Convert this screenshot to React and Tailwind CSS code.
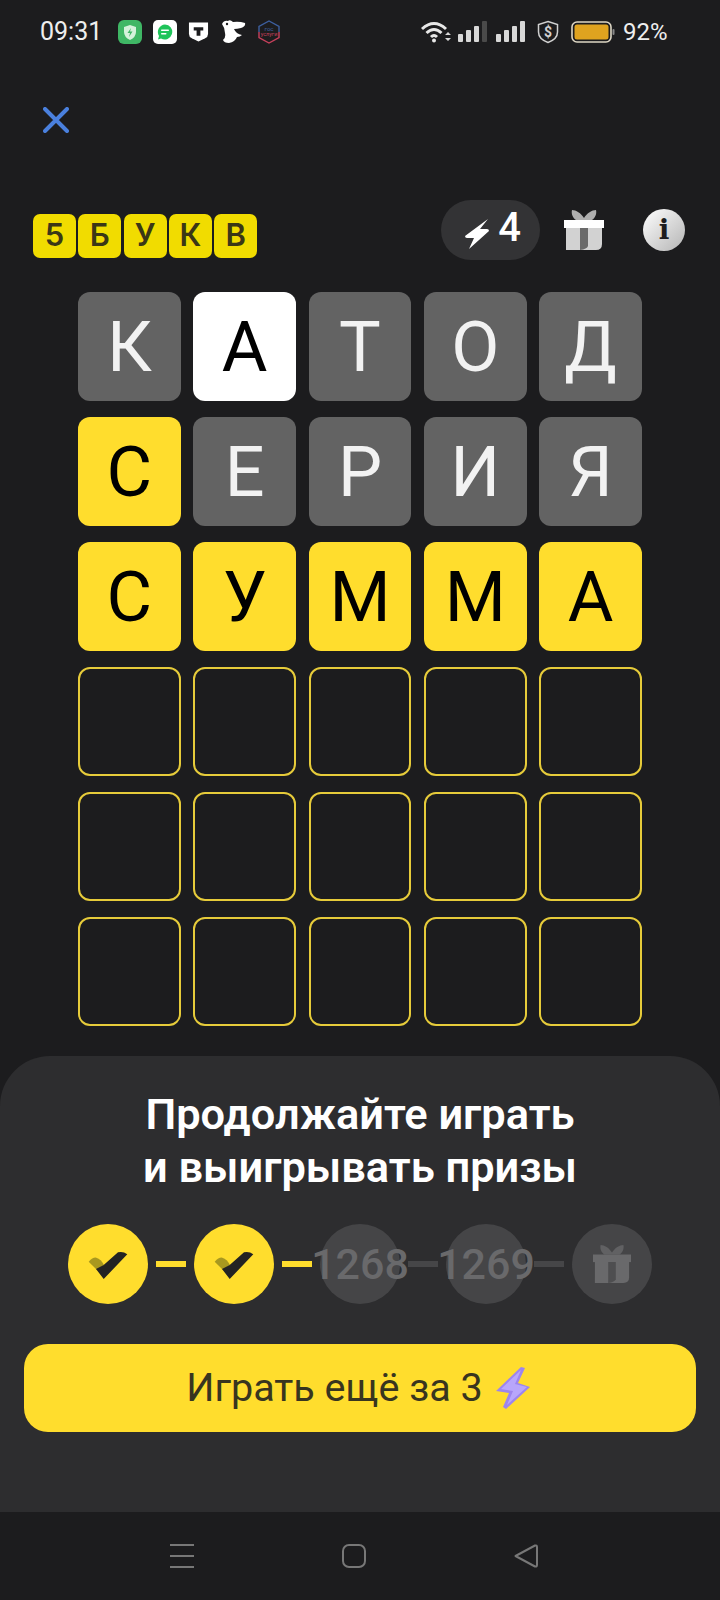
import React from 'react';

const rows = [
  [['К', 'gray'], ['А', 'white'], ['Т', 'gray'], ['О', 'gray'], ['Д', 'gray']],
  [['С', 'yellow'], ['Е', 'gray'], ['Р', 'gray'], ['И', 'gray'], ['Я', 'gray']],
  [['С', 'yellow'], ['У', 'yellow'], ['М', 'yellow'], ['М', 'yellow'], ['А', 'yellow']],
  [['', 'empty'], ['', 'empty'], ['', 'empty'], ['', 'empty'], ['', 'empty']],
  [['', 'empty'], ['', 'empty'], ['', 'empty'], ['', 'empty'], ['', 'empty']],
  [['', 'empty'], ['', 'empty'], ['', 'empty'], ['', 'empty'], ['', 'empty']],
];

const cellStyles = {
  gray: 'bg-[#636363] text-[#f2f2f2]',
  white: 'bg-white text-black',
  yellow: 'bg-[#ffdd2d] text-black',
  empty: 'border-2 border-[#e6cb3a]',
};

const Gift = ({ bow, bar, body, stripe, className }) => (
  <svg viewBox="0 0 40 40" className={className}>
    <path d="M8 0 C12 0 17 3 20 8 C23 3 28 0 32 0 C33 4 31 8 28 10 L12 10 C9 8 7 4 8 0 Z" fill={bow} />
    <rect x="0" y="10" width="40" height="8" fill={bar} />
    <path d="M2 18 H38 V34 Q38 40 32 40 H2 Z" fill={body} />
    <path d="M16 18 H24 V36 Q23 39 16 40 Z" fill={stripe} />
  </svg>
);

const Check = () => (
  <svg viewBox="0 0 80 80" className="w-20 h-20">
    <path d="M20.7 37.7 Q25 33 28.3 33.7 Q33 35 36 41 L29 46 Z" fill="#a8981f" />
    <path d="M28 45 L35.7 41 L50 28.3 Q55 27 59.3 30.3 L35.7 55 Z" fill="#232323" />
  </svg>
);

const Signal = ({ dim }) => (
  <svg viewBox="0 0 29 22" className="w-[29px] h-[22px]">
    <rect x="0" y="13" width="5" height="8" rx="1" fill="#d8d8d8" />
    <rect x="8" y="9" width="5" height="12" rx="1" fill="#d8d8d8" />
    <rect x="16" y="5" width="5" height="16" rx="1" fill="#d8d8d8" />
    <rect x="24" y="0" width="5" height="21" rx="1" fill={dim ? '#4a4a4a' : '#d8d8d8'} />
  </svg>
);

const StatusBar = () => (
  <div className="h-16 flex items-center pl-[40px] text-[#eeeeee] text-[25px] font-['Roboto',sans-serif]">
    <span className="w-[78px]">09:31</span>
    <div className="flex items-center gap-[11px]">
      <svg viewBox="0 0 24 24" className="w-6 h-6">
        <rect width="24" height="24" rx="6" fill="#3fb765" />
        <path d="M12 5 L18 7 V12 Q18 17 12 20 Q6 17 6 12 V7 Z" fill="#d5f2dc" />
        <path d="M13 8 L9.5 13 H12 L11 17 L14.5 11.5 H12 Z" fill="#3fb765" />
      </svg>
      <svg viewBox="0 0 24 24" className="w-6 h-6">
        <rect width="24" height="24" rx="5" fill="#ffffff" />
        <path d="M12 4.5 A7.5 7.5 0 1 1 8 18.5 L5 19.5 L6 16 A7.5 7.5 0 0 1 12 4.5 Z" fill="#1fc45a" />
        <rect x="8" y="9.5" width="8" height="1.5" rx="0.7" fill="#fff" />
        <rect x="8" y="13" width="5.5" height="1.5" rx="0.7" fill="#fff" />
      </svg>
      <svg viewBox="0 0 22 24" className="w-[21px] h-6">
        <path d="M1 2 H21 V14 Q21 17 18 18.5 L11 22 L4 18.5 Q1 17 1 14 Z" fill="#ffffff" />
        <path d="M6 7 H16 V10.5 H13 V16 H9 V10.5 H6 Z" fill="#1c1c1e" />
      </svg>
      <svg viewBox="0 0 26 24" className="w-[26px] h-6">
        <path d="M2 4 Q4 0 8 1 Q10 -1 13 2 Q19 1 25 3 Q26 6 21 8 Q17 9 14 9 Q16 14 22 15 Q20 17 17 17 Q15 22 9 23 Q4 23 3 20 Q6 18 5 13 Q5 8 2 4 Z" fill="#ffffff" />
        <circle cx="7" cy="4" r="1.2" fill="#1c1c1e" />
      </svg>
      <svg viewBox="0 0 24 24" className="w-6 h-6">
        <path d="M2 12 V6.5 L12 1 L22 6.5 V12" stroke="#3d5f9f" strokeWidth="1.4" fill="none" />
        <path d="M2 12 V17.5 L12 23 L22 17.5 V12" stroke="#c7405c" strokeWidth="1.4" fill="none" />
        <text x="12" y="10.5" textAnchor="middle" fontSize="6" fill="#3d5f9f" fontFamily="Roboto, sans-serif">гос</text>
        <text x="12" y="15.5" textAnchor="middle" fontSize="5.5" fill="#c7405c" fontFamily="Roboto, sans-serif">услуги</text>
      </svg>
    </div>
    <div className="flex items-center ml-[140px]">
      <svg viewBox="0 0 30 24" className="w-[30px] h-6">
        <path d="M1 9 Q13 -2 25 9" stroke="#e8e8e8" strokeWidth="3" fill="none" />
        <path d="M5.5 13 Q13 6 20.5 13" stroke="#e8e8e8" strokeWidth="3" fill="none" />
        <path d="M10 17 Q13 14 16 17" stroke="#e8e8e8" strokeWidth="3" fill="none" />
        <circle cx="13" cy="20.5" r="2" fill="#e8e8e8" />
        <path d="M24 15 L27 12 L30 15 Z M24 18 H30 L27 21 Z" fill="#d8d8d8" />
      </svg>
      <div className="ml-[7px]"><Signal dim /></div>
      <div className="ml-[9px]"><Signal /></div>
      <svg viewBox="0 0 22 24" className="ml-[12px] w-[22px] h-6">
        <path d="M11 1.5 L20.5 4.5 V12 Q20.5 19 11 22.5 Q1.5 19 1.5 12 V4.5 Z" stroke="#d0d0d0" strokeWidth="1.5" fill="none" />
        <text x="11" y="17" textAnchor="middle" fontSize="14" fontWeight="700" fill="#d0d0d0" fontFamily="Roboto, sans-serif">$</text>
      </svg>
      <svg viewBox="0 0 44 22" className="ml-[12px] w-[44px] h-[22px]">
        <rect x="1" y="1" width="39" height="20" rx="5" stroke="#ddd6c4" strokeWidth="1.6" fill="none" />
        <rect x="3.5" y="3.5" width="34" height="15" rx="2.5" fill="#dfa31f" />
        <rect x="41.5" y="8" width="2" height="6" rx="1" fill="#888888" />
      </svg>
      <span className="ml-[8px] text-[24px]">92%</span>
    </div>
  </div>
);

const Logo = () => (
  <div className="flex gap-[2.3px] mt-[11px] font-['Inter',sans-serif] font-semibold">
    {['5', 'Б', 'У', 'К', 'В'].map((ch, i) => (
      <div key={i} className="w-[43px] h-[44px] rounded-[7px] bg-[#f1dc00] text-[#3b3716] text-[31px] flex items-center justify-center">
        {ch}
      </div>
    ))}
  </div>
);

const Header = () => (
  <div className="mt-[67px] h-[60px] flex items-center pl-[33px]">
    <Logo />
    <div className="ml-[184px] w-[99px] h-[60px] rounded-[30px] bg-[#333335] flex items-center pl-[24px]">
      <svg viewBox="0 0 24 30" className="w-[24px] h-[30px] mt-[8px]">
        <path d="M23 0 L0 17 Q0 19 2 19 H9 L4 30 L24 12 Q24 10 22 10 H15 Z" fill="#ffffff" />
      </svg>
      <span className="ml-[9px] mb-[4px] text-white text-[40px] font-medium leading-none font-['Roboto',sans-serif]">4</span>
    </div>
    <Gift bow="#aeaeae" bar="#ffffff" body="#d2d2d2" stripe="#6a6a6a" className="ml-[24px] w-[40px] h-[40px]" />
    <div className="ml-[39px] w-[42px] h-[42px] rounded-full bg-gradient-to-br from-white to-[#b5b5b5] flex items-center justify-center">
      <span className="text-[#1c1c1e] text-[28px] font-bold font-['DejaVu_Serif',serif] leading-none">i</span>
    </div>
  </div>
);

const Board = () => (
  <div className="mt-[32px] mx-[78px] flex flex-col gap-y-[16px] font-['Roboto',sans-serif]">
    {rows.map((row, r) => (
      <div key={r} className="grid grid-cols-5 gap-x-[12.5px]">
        {row.map(([ch, kind], c) => (
          <div key={c} className={`h-[109px] rounded-[12px] flex items-center justify-center text-[70px] leading-none ${cellStyles[kind]}`}>
            {ch}
          </div>
        ))}
      </div>
    ))}
  </div>
);

const Line = ({ active }) => (
  <div className={`w-[30px] h-[6px] mx-[8px] ${active ? 'bg-[#ffdd2d]' : 'bg-[#464648]'}`} />
);

const Steps = () => (
  <div className="mt-[30px] flex items-center pl-[68px]">
    <div className="w-20 h-20 rounded-full bg-[#ffdd2d]"><Check /></div>
    <Line active />
    <div className="w-20 h-20 rounded-full bg-[#ffdd2d]"><Check /></div>
    <Line active />
    <div className="w-20 h-20 rounded-full bg-[#454547] flex items-center justify-center text-[#69696b] text-[43px] font-medium">
      <span className="whitespace-nowrap">1268</span>
    </div>
    <Line />
    <div className="w-20 h-20 rounded-full bg-[#454547] flex items-center justify-center text-[#69696b] text-[43px] font-medium">
      <span className="whitespace-nowrap">1269</span>
    </div>
    <Line />
    <div className="w-20 h-20 rounded-full bg-[#454547] flex items-center justify-center">
      <Gift bow="#616163" bar="#69696b" body="#69696b" stripe="#4e4e50" className="w-[38px] h-[38px]" />
    </div>
  </div>
);

const Sheet = () => (
  <div className="mt-[30px] h-[456px] rounded-t-[50px] bg-[#2d2d2f] pt-[32px] font-['Roboto',sans-serif]">
    <h2 className="text-white text-[43.4px] font-semibold leading-[53px] text-center">
      Продолжайте играть
      <br />
      и выигрывать призы
    </h2>
    <Steps />
    <div className="mt-[40px] mx-[24px] h-[88px] rounded-[24px] bg-[#ffdd2d] flex items-center justify-center text-[#38351f] text-[39.5px]">
      <span>Играть ещё за 3</span>
      <svg viewBox="0 0 34 42" className="ml-[11px] w-[38px] h-[42px] mr-[2px]">
        <path d="M25 0 L29 1 L22 16 L34 20 L10 42 L7 40 L13 26 L0 24 Z" fill="#9d85ee" />
        <path d="M25 3 L5 22 L17 24 L11 38 L31 20 L19 17 Z" fill="#b8a6fb" />
      </svg>
    </div>
  </div>
);

const NavBar = () => (
  <div className="h-[88px] pt-[32px] pl-[170px] flex items-start gap-[148px]">
    <div className="w-6 h-6 flex flex-col justify-between">
      <div className="h-[2px] bg-[#777777]" />
      <div className="h-[2px] bg-[#777777]" />
      <div className="h-[2px] bg-[#777777]" />
    </div>
    <div className="w-6 h-6 rounded-[7px] border-2 border-[#777777]" />
    <svg viewBox="0 0 24 24" className="w-6 h-6">
      <path d="M1.5 12 L21 1.5 Q23 1 23 3 V21 Q23 23 21 22.5 Z" stroke="#777777" strokeWidth="2" strokeLinejoin="round" fill="none" />
    </svg>
  </div>
);

export default function App() {
  return (
    <div className="w-[720px] h-[1600px] bg-[#1c1c1e] overflow-hidden flex flex-col">
      <StatusBar />
      <div className="pt-[43px] pl-[43px]">
        <svg viewBox="0 0 26 26" className="w-[26px] h-[26px]">
          <path d="M2 2 L24 24 M24 2 L2 24" stroke="#4a80de" strokeWidth="4" strokeLinecap="round" />
        </svg>
      </div>
      <Header />
      <Board />
      <Sheet />
      <NavBar />
    </div>
  );
}
